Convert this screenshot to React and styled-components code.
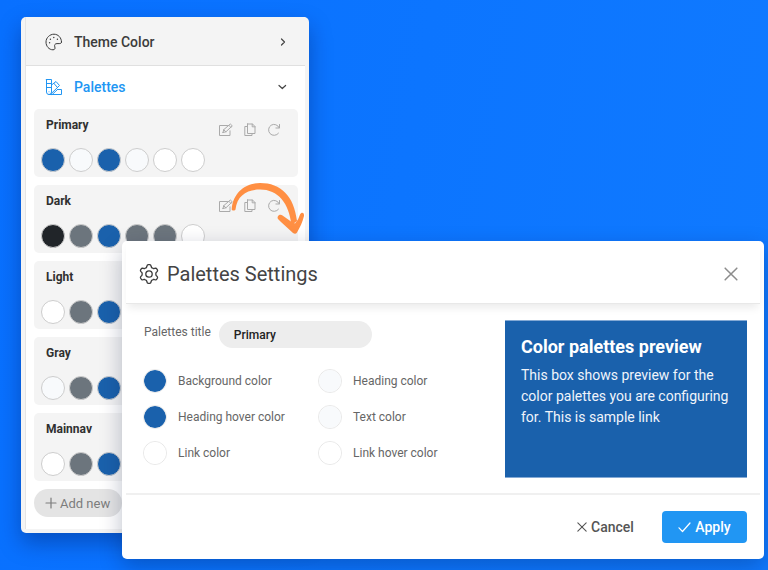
import React from "react";
import styled, { createGlobalStyle } from "styled-components";

const GlobalStyle = createGlobalStyle`
  *, *::before, *::after { box-sizing: border-box; }
  body { margin: 0; font-family: Roboto, "Liberation Sans", sans-serif; color: #3c3c3c; }
  button, input { font-family: inherit; }
  button { cursor: pointer; }
`;

const Page = styled.main`
  position: relative;
  min-height: 100vh;
  overflow: hidden;
  padding: 17px 21px 37px;
  background: linear-gradient(100deg, #0870ff, #107aff);
`;

const Sidebar = styled.aside`
  width: 288px;
  padding: 0 4px 4px;
  background: #f4f4f4;
  border-radius: 5px;
  box-shadow: 0 10px 22px rgba(0, 20, 80, 0.36);
`;

const SidebarBody = styled.div`
  background: #fff;
  border-left: 1px solid #e4e4e4;
`;

const SectionButton = styled.button`
  display: flex;
  align-items: center;
  width: 100%;
  height: ${(p) => (p.$open ? "43px" : "49px")};
  padding: ${(p) => (p.$open ? "0 18px 2px 19px" : "2px 17px 0 19px")};
  gap: 11px;
  border: 0;
  border-bottom: ${(p) => (p.$open ? "0" : "1px solid #e0e0e0")};
  background: ${(p) => (p.$open ? "#fff" : "#f4f4f4")};
  color: ${(p) => (p.$open ? "#2196f3" : "#3c3c3c")};
  font-size: 14px;
  font-weight: 500;
  text-align: left;

  span { flex: 1; }
  svg:last-child { color: #444; }
`;

const PaletteList = styled.div`
  display: flex;
  flex-direction: column;
  align-items: flex-start;
  gap: 8px;
  padding: 0 7px 12px 8px;
`;

const PaletteCard = styled.section`
  display: grid;
  grid-template-columns: 1fr auto;
  width: 100%;
  height: 68px;
  padding: 7px 7px 5px;
  border-radius: 5px;
  background: #f4f4f4;
`;

const PaletteName = styled.h3`
  margin: 0;
  padding-left: 5px;
  font-size: 12px;
  font-weight: 700;
  line-height: 18px;
  color: #303030;
`;

const Actions = styled.div`
  display: flex;
  gap: 8px;
  padding: 6px 9px 0 0;
`;

const IconButton = styled.button`
  display: flex;
  align-items: center;
  justify-content: center;
  width: ${(p) => p.$size}px;
  height: ${(p) => p.$size}px;
  padding: 0;
  border: 0;
  background: none;
  color: ${(p) => p.$color};
`;

const Swatches = styled.div`
  display: flex;
  grid-column: 1 / -1;
  align-self: end;
  gap: 4px;
`;

const Swatch = styled.button`
  width: 24px;
  height: 24px;
  padding: 0;
  border: 1px solid #cdcdcd;
  border-radius: 50%;
  background: ${(p) => p.$color};
`;

const AddButton = styled.button`
  display: flex;
  align-items: center;
  gap: 3px;
  height: 28px;
  padding: 0 12px 0 11px;
  border: 0;
  border-radius: 14px;
  background: #e4e4e4;
  color: #7c7c7c;
  font-size: 13px;
  white-space: nowrap;
`;

const Arrow = styled.svg`
  position: absolute;
  left: 228px;
  top: 180px;
  pointer-events: none;
`;

const Dialog = styled.section`
  position: absolute;
  top: 241px;
  left: 122px;
  right: 4px;
  padding: 0 4px;
  border-radius: 5px;
  background: #fff;
  box-shadow: 0 8px 22px rgba(0, 20, 60, 0.27);
`;

const DialogHeader = styled.header`
  display: flex;
  align-items: center;
  gap: 8px;
  height: 63px;
  padding: 4px 17px 0 13px;
  border-bottom: 1px solid #e8e8e8;
  box-shadow: 0 6px 8px -2px rgba(0, 0, 0, 0.08);
`;

const DialogTitle = styled.h2`
  flex: 1;
  margin: 0;
  font-size: 20px;
  font-weight: 400;
  line-height: 28px;
  color: #444;
`;

const DialogBody = styled.div`
  display: flex;
  justify-content: space-between;
  gap: 20px;
  height: 189px;
  padding: 16px 13px 15px 17px;
`;

const Form = styled.form`
  flex: 1;
`;

const TitleRow = styled.div`
  display: flex;
  align-items: flex-start;
  gap: 8px;
  padding: 1px 0 0 1px;
`;

const FieldLabel = styled.label`
  color: #666;
  font-size: 12px;
  line-height: ${(p) => p.$line};
  white-space: nowrap;
`;

const TitleInput = styled.input`
  width: 153px;
  height: 27px;
  padding: 0 15px;
  border: 0;
  border-radius: 14px;
  background: #ededed;
  color: #222;
  font-size: 12px;
  font-weight: 500;
`;

const ColorGrid = styled.div`
  display: grid;
  grid-template-columns: 175px 1fr;
  row-gap: 12px;
  margin-top: 21px;
`;

const ColorField = styled.div`
  display: flex;
  align-items: center;
  gap: 11px;
`;

const ColorInput = styled.input`
  appearance: none;
  width: 24px;
  height: 24px;
  padding: 0;
  border: 1px solid #e8e8e8;
  border-radius: 50%;
  overflow: hidden;
  background: none;

  &::-webkit-color-swatch-wrapper { padding: 0; }
  &::-webkit-color-swatch { border: 0; border-radius: 50%; }
`;

const Preview = styled.article`
  width: 242px;
  padding: 16px 14px 16px 16px;
  border-top: 1px solid #83a9d5;
  border-bottom: 1px solid #83a9d5;
  background: #1a61ac;
  color: #f0f4fb;
`;

const PreviewTitle = styled.h3`
  margin: 0 0 8px;
  font-size: 18px;
  font-weight: 700;
  line-height: 20px;
  color: #fff;
`;

const PreviewText = styled.p`
  margin: 0;
  font-size: 14px;
  line-height: 21px;

  a { color: inherit; text-decoration: none; }
`;

const DialogFooter = styled.footer`
  display: flex;
  align-items: center;
  justify-content: flex-end;
  gap: 14px;
  height: 66px;
  padding: 0 13px 0;
  border-top: 2px solid #f0f0f0;
`;

const FooterButton = styled.button`
  display: flex;
  align-items: center;
  justify-content: center;
  gap: 4px;
  width: 85px;
  height: 32px;
  padding: 0;
  border: 0;
  border-radius: 4px;
  background: ${(p) => (p.$primary ? "#2196f3" : "transparent")};
  color: ${(p) => (p.$primary ? "#fff" : "#555")};
  font-size: 14px;
  font-weight: 500;
`;

const Line = ({ size, width = size, box, stroke = 1, children }) => (
  <svg width={width} height={size} viewBox={box || `0 0 ${width} ${size}`} fill="none"
    stroke="currentColor" strokeWidth={stroke} strokeLinecap="round" strokeLinejoin="round" aria-hidden="true">
    {children}
  </svg>
);

const PaletteIcon = () => (
  <Line size={18}>
    <path d="M16.5 9C16.5 4.7 13.2 1.200 9 1.200S1 4.7 1 9s3 7.800 7 7.800c2 0 2.300-1.400 1.800-2.900-.7-1.900.2-3.300 2.200-3.300h2.200c1.500 0 2.300-.4 2.300-1.600Z" />
    <g fill="currentColor" stroke="none">
      <circle cx="4.6" cy="9.800" r=".7" /><circle cx="5.400" cy="6.200" r=".7" />
      <circle cx="8.800" cy="4.500" r=".7" /><circle cx="12.400" cy="6.200" r=".7" />
    </g>
  </Line>
);

const SwatchesIcon = () => (
  <Line size={18}>
    <path d="M1.500 1.500h5v12.500a2.500 2.500 0 0 1-5 0V1.500ZM1.500 5.500h5M1.500 9.500h5M6.500 7l4.500-3.500 3.500 4-8.500 8.300M8.800 5.300l3.500 4M12.500 11.500h4v5H4M12.500 11.500L7.200 16.500" />
    <circle cx="4" cy="13.800" r=".5" fill="currentColor" stroke="none" />
  </Line>
);

const EditIcon = () => (
  <Line size={14}>
    <path d="M8.500 2.500h-8v10h10.500V7.800M4 9.500l.7-2.800L11.300 1l2 1.900-6.400 5.900L4 9.500ZM9.800 2.300l2 2M4.700 6.700l2.200 2.100" />
  </Line>
);

const CopyIcon = () => (
  <Line size={14}>
    <path d="M4.500 1h5l2.500 2.500v7h-7.500V1ZM9.200 1v2.800h2.800M4.500 3.500h-2.700v9h7.200v-2" />
  </Line>
);

const RedoIcon = () => (
  <Line size={14}>
    <path d="M11.500 10.200A5.500 5.500 0 1 1 12.200 4.800M12.500 1.500v3.500H8.900" />
  </Line>
);

const gearPath = (() => {
  const count = 96;
  const points = Array.from({ length: count }, (_, i) => {
    const angle = (i / count) * Math.PI * 2;
    const wave = Math.max(-1, Math.min(1, Math.cos(angle * 6) * 1.7));
    const r = 8.1 + wave * 1.2;
    return `${(10 + Math.sin(angle) * r).toFixed(2)} ${(10 - Math.cos(angle) * r).toFixed(2)}`;
  });
  return `M${points.join("L")}Z`;
})();

const GearIcon = () => (
  <Line size={20} stroke={1.3}>
    <path d={gearPath} />
    <circle cx="10" cy="10" r="3.200" />
  </Line>
);

const CrossIcon = ({ size, stroke }) => (
  <Line size={size} box="0 0 12 12" stroke={stroke}><path d="M1 1l10 10M11 1L1 11" /></Line>
);

const WHITE = "#ffffff";
const PALE = "#f8fafc";
const BLUE = "#1a61ac";
const GRAY = "#6c757d";

const palettes = [
  { name: "Primary", colors: [BLUE, PALE, BLUE, PALE, WHITE, WHITE] },
  { name: "Dark", colors: ["#212529", GRAY, BLUE, GRAY, GRAY, WHITE] },
  { name: "Light", colors: [WHITE, GRAY, BLUE, GRAY, GRAY, WHITE] },
  { name: "Gray", colors: [PALE, GRAY, BLUE, GRAY, GRAY, WHITE] },
  { name: "Mainnav", colors: [WHITE, GRAY, BLUE, GRAY, GRAY, WHITE] },
];

const colorFields = [
  ["Background color", BLUE],
  ["Heading color", PALE],
  ["Heading hover color", BLUE],
  ["Text color", PALE],
  ["Link color", WHITE],
  ["Link hover color", WHITE],
];

const Palette = ({ name, colors }) => (
  <PaletteCard>
    <PaletteName>{name}</PaletteName>
    <Actions>
      <IconButton $size={16} $color="#aaa" aria-label={`Edit ${name}`}><EditIcon /></IconButton>
      <IconButton $size={16} $color="#aaa" aria-label={`Copy ${name}`}><CopyIcon /></IconButton>
      <IconButton $size={16} $color="#aaa" aria-label={`Reset ${name}`}><RedoIcon /></IconButton>
    </Actions>
    <Swatches>
      {colors.map((color, i) => (
        <Swatch key={i} $color={color} aria-label={`${name} color ${i + 1}`} />
      ))}
    </Swatches>
  </PaletteCard>
);

export default function App() {
  return (
    <Page>
      <GlobalStyle />
      <Sidebar>
        <SidebarBody>
          <SectionButton aria-expanded="false">
            <PaletteIcon />
            <span>Theme Color</span>
            <Line size={10} stroke={1.2}><path d="M3.500 2L6.500 5l-3 3" /></Line>
          </SectionButton>
          <SectionButton $open aria-expanded="true">
            <SwatchesIcon />
            <span>Palettes</span>
            <Line size={10} stroke={1.2}><path d="M2 3.500l3.300 3 3.300-3" /></Line>
          </SectionButton>
          <PaletteList>
            {palettes.map((p) => <Palette key={p.name} {...p} />)}
            <AddButton>
              <Line size={12} stroke={1.2}><path d="M6 1v10M1 6h10" /></Line>
              Add new
            </AddButton>
          </PaletteList>
        </SidebarBody>
      </Sidebar>

      <Arrow width="80" height="58" viewBox="228 180 80 58" aria-hidden="true">
        <path fill="#ff8f43" d="M231.700 209C233 193 245 183 260 183c21 0 34 13 37 38l-5.500 4C289 203 278 189.500 260 189.500c-13 0-23 6-24.500 20-.4 1.500-4 1.500-3.800-.5Z" />
        <path fill="#ff8f43" d="M278 219c-1.500-3 2-5.500 4.500-3.500l8.500 6 4 2 3-4 2-5c1.500-3 4.500-2 4 1.500-1.500 6.500-4 11-7 16.500-1 1.600-2.500 1.600-4 .5L281 222Z" />
      </Arrow>

      <Dialog role="dialog" aria-labelledby="dialog-title">
        <DialogHeader>
          <GearIcon />
          <DialogTitle id="dialog-title">Palettes Settings</DialogTitle>
          <IconButton $size={24} $color="#8c8c8c" aria-label="Close">
            <CrossIcon size={14} stroke={1.3} />
          </IconButton>
        </DialogHeader>
        <DialogBody>
          <Form>
            <TitleRow>
              <FieldLabel htmlFor="palette-title" $line="22px">Palettes title</FieldLabel>
              <TitleInput id="palette-title" defaultValue="Primary" />
            </TitleRow>
            <ColorGrid>
              {colorFields.map(([label, color], i) => (
                <ColorField key={label}>
                  <ColorInput id={`color-${i}`} type="color" defaultValue={color} />
                  <FieldLabel htmlFor={`color-${i}`} $line="24px">{label}</FieldLabel>
                </ColorField>
              ))}
            </ColorGrid>
          </Form>
          <Preview>
            <PreviewTitle>Color palettes preview</PreviewTitle>
            <PreviewText>
              This box shows preview for the color palettes you are configuring for. <a href="#sample">This is sample link</a>
            </PreviewText>
          </Preview>
        </DialogBody>
        <DialogFooter>
          <FooterButton>
            <CrossIcon size={10} stroke={1.3} />
            Cancel
          </FooterButton>
          <FooterButton $primary>
            <Line size={12} width={13} stroke={1.2}><path d="M1 6.800L4.500 10.500 12 2" /></Line>
            Apply
          </FooterButton>
        </DialogFooter>
      </Dialog>
    </Page>
  );
}
